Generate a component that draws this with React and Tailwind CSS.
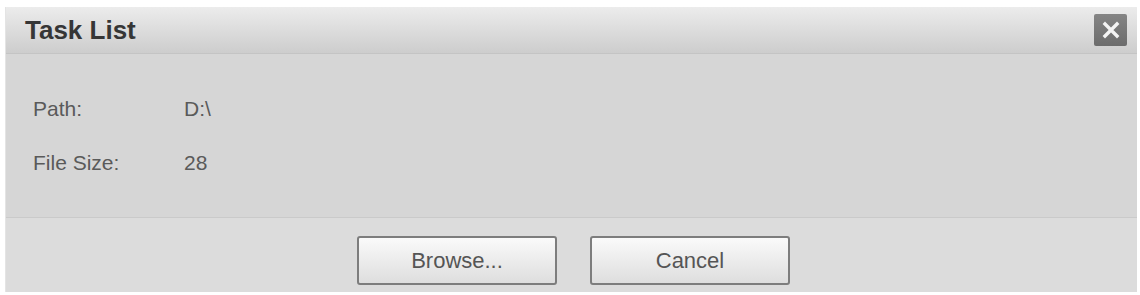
const App = () => {
  return (
    <div className="w-[1140px] h-[295px] bg-white pt-[7px] pl-[5px] font-['Liberation_Sans',Arial,sans-serif]">
      <div className="w-[1132px] h-[285px] flex flex-col bg-[#d6d6d6] border-l border-[#e4e4e4]">
        <div className="h-[47px] flex items-center justify-between pl-[19px] pr-[10px] bg-gradient-to-b from-[#ececec] to-[#cdcdcd] border-b border-[#c4c4c4]">
          <span className="text-[26px] font-bold text-[#363636]">Task List</span>
          <button className="w-[33px] h-[32px] flex items-center justify-center bg-gradient-to-b from-[#858585] to-[#6c6c6c] rounded-[2px]">
            <svg width="20" height="20" viewBox="0 0 20 20">
              <path d="M4 4 L16 16 M16 4 L4 16" stroke="#f4f4f4" strokeWidth="3.4" strokeLinecap="square" />
            </svg>
          </button>
        </div>

        <div className="h-[164px] pl-[27px] pt-[43px] text-[21px] text-[#5a5a5a] border-b border-[#cacaca]">
          <div className="flex h-[24px] items-center">
            <span className="w-[151px]">Path:</span>
            <span>D:\</span>
          </div>
          <div className="flex h-[24px] items-center mt-[30px]">
            <span className="w-[151px]">File Size:</span>
            <span>28</span>
          </div>
        </div>

        <div className="flex-1 bg-[#dcdcdc] flex justify-center gap-[33px] pt-[18px] pl-[4px]">
          <FooterButton label="Browse..." />
          <FooterButton label="Cancel" />
        </div>
      </div>
    </div>
  );
};

const FooterButton = ({ label }) => (
  <button className="w-[200px] h-[49px] border-2 border-[#7d7d7d] rounded-[3px] bg-gradient-to-b from-[#fafafa] to-[#dedede] text-[22px] text-[#555]">
    {label}
  </button>
);

export default App;
